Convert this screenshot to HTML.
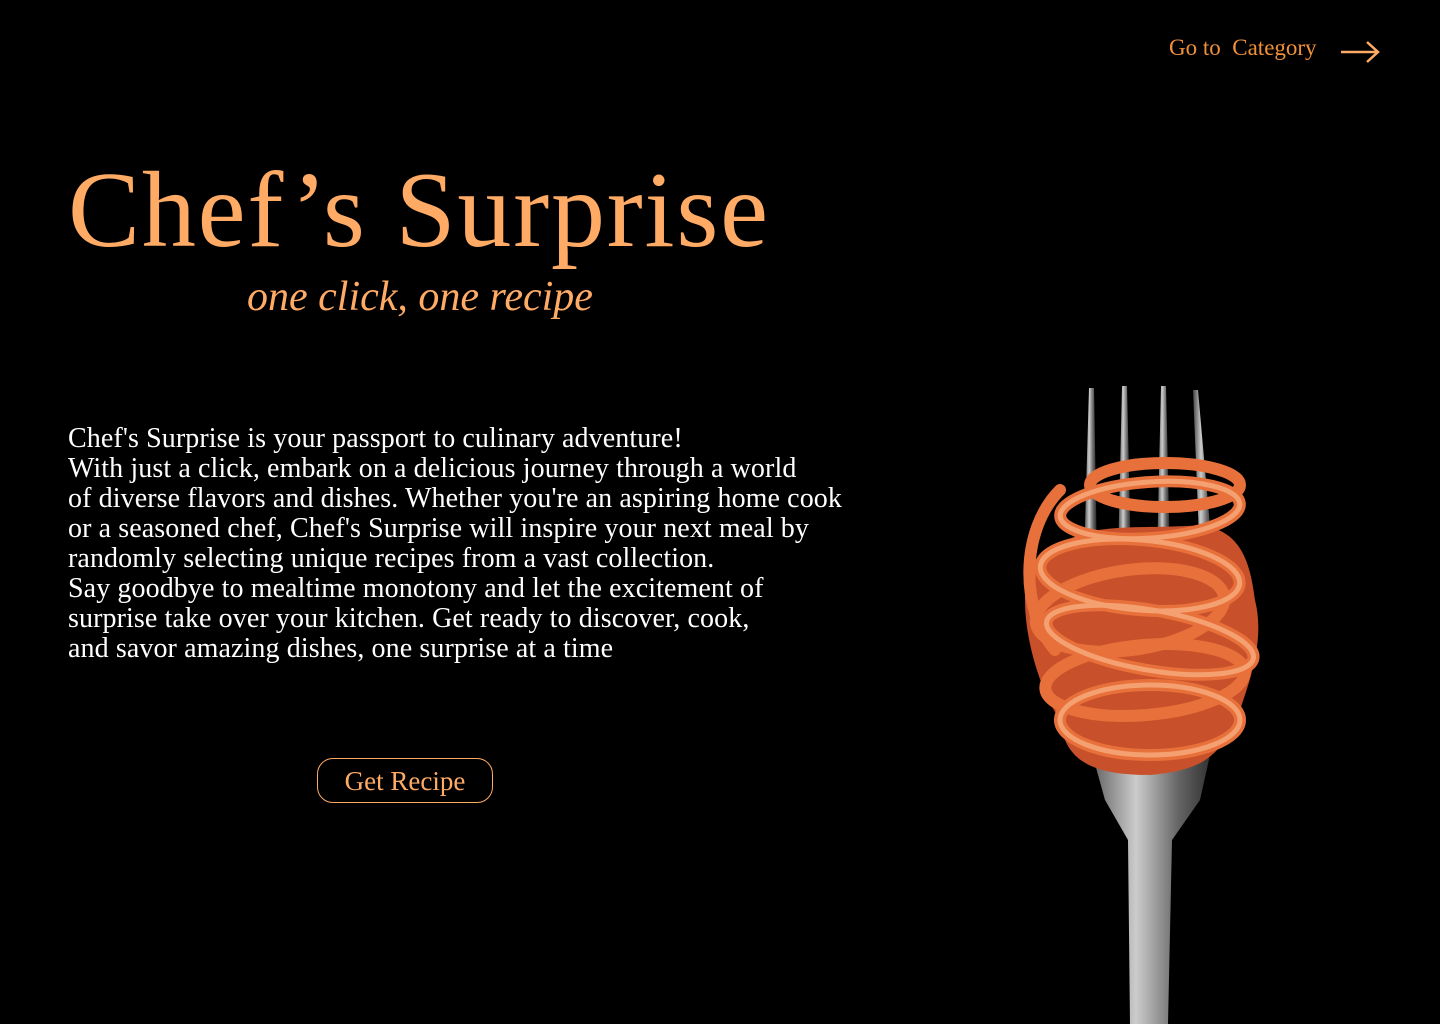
<!DOCTYPE html>
<html><head><meta charset="utf-8"><style>
body{margin:0;width:1440px;height:1024px;background:#000;overflow:hidden;position:relative;font-family:"Liberation Serif",serif}
.nav{position:absolute;left:1169px;top:35px;color:#f0913a;font-size:23px}
h1{position:absolute;left:68px;top:146px;margin:0;font-weight:400;font-size:108px;color:#ffab66;line-height:1.2;letter-spacing:1.8px}
.sub{position:absolute;left:247px;top:273px;font-style:italic;font-size:42px;color:#ffab66}
.body{position:absolute;left:68px;top:424px;color:#fff;font-size:28px;line-height:30px;letter-spacing:0.1px}
.btn{position:absolute;left:317px;top:758px;width:174px;height:43px;border:1px solid #ffab66;border-radius:16px;color:#ffab66;font-size:27px;text-align:center;line-height:44px;box-sizing:content-box}
</style></head><body>
<div class="nav">Go to&nbsp; Category</div>
<svg style="position:absolute;left:1340px;top:40px" width="40" height="24"><path d="M1 12H38M27 2L38 12L27 22" stroke="#ffab66" stroke-width="2.5" fill="none"/></svg>
<h1>Chef’s Surprise</h1>
<div class="sub">one click, one recipe</div>
<div class="body">Chef's Surprise is your passport to culinary adventure!<br>With just a click, embark on a delicious journey through a world<br>of diverse flavors and dishes. Whether you're an aspiring home cook<br>or a seasoned chef, Chef's Surprise will inspire your next meal by<br>randomly selecting unique recipes from a vast collection.<br>Say goodbye to mealtime monotony and let the excitement of<br>surprise take over your kitchen. Get ready to discover, cook,<br>and savor amazing dishes, one surprise at a time</div>
<div class="btn">Get Recipe</div>
<svg style="position:absolute;left:1000px;top:380px" width="290" height="644" viewBox="0 0 290 644">
<defs><linearGradient id="m" x1="0" x2="1"><stop offset="0" stop-color="#444"/><stop offset=".4" stop-color="#ccc"/><stop offset=".7" stop-color="#666"/><stop offset="1" stop-color="#222"/></linearGradient></defs>
<g fill="url(#m)">
<path d="M89 8 L94 8 L97 180 L84 180Z"/><path d="M122 6 L127 6 L131 180 L118 180Z"/><path d="M161 6 L166 6 L170 180 L157 180Z"/><path d="M193 10 L198 10 L213 180 L200 180Z"/>
<path d="M80 330 L220 330 L200 420 L172 460 L168 644 L130 644 L128 460 L105 420Z"/>
</g>
<path d="M60 170 C75 140 150 150 200 145 C240 150 250 180 255 220 C265 260 250 300 240 330 C220 380 200 390 150 395 C90 395 65 380 60 340 C40 310 25 260 25 220 C25 190 40 170 60 170Z" fill="#c8502a"/>
<g fill="none" stroke="#e8703a" stroke-width="12" stroke-linecap="round">
<ellipse cx="150" cy="130" rx="90" ry="28" transform="rotate(-4 150 130)"/>
<ellipse cx="165" cy="105" rx="75" ry="22"/>
<ellipse cx="140" cy="195" rx="100" ry="35" transform="rotate(5 140 195)"/>
<ellipse cx="130" cy="230" rx="95" ry="40" transform="rotate(-8 130 230)"/>
<ellipse cx="150" cy="260" rx="105" ry="30" transform="rotate(10 150 260)"/>
<ellipse cx="145" cy="300" rx="100" ry="35" transform="rotate(-5 145 300)"/>
<ellipse cx="150" cy="340" rx="90" ry="35"/>
<path d="M60 110 C20 150 20 230 55 270"/>
</g>
<g fill="none" stroke="#f4a070" stroke-width="5">
<ellipse cx="150" cy="130" rx="90" ry="28" transform="rotate(-4 150 130)"/>
<ellipse cx="140" cy="195" rx="100" ry="35" transform="rotate(5 140 195)"/>
<ellipse cx="150" cy="260" rx="105" ry="30" transform="rotate(10 150 260)"/>
<ellipse cx="150" cy="340" rx="90" ry="35"/>
</g>
</svg>
</body></html>
